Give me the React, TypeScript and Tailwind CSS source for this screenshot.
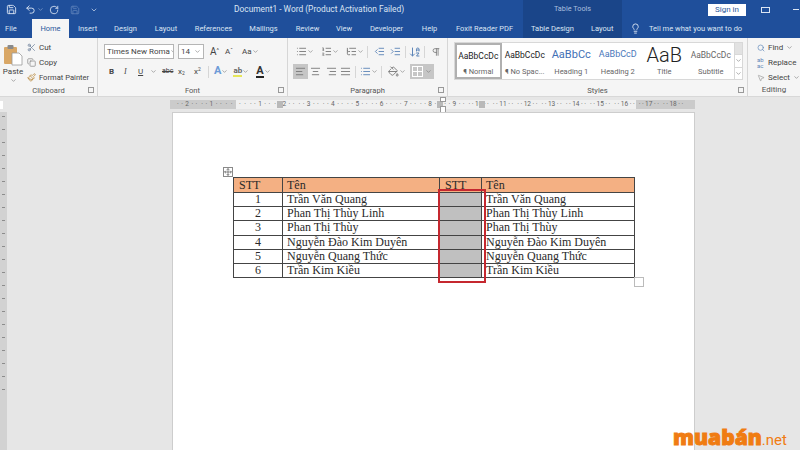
import {
  AlignCenter,
  AlignJustify,
  AlignLeft,
  AlignRight,
  ArrowDownAZ,
  ChevronDown,
  Copy,
  IndentDecrease,
  IndentIncrease,
  Lightbulb,
  List,
  ListOrdered,
  ListTree,
  MousePointer2,
  Move,
  PaintBucket,
  Paintbrush,
  Pilcrow,
  RotateCw,
  Save,
  Scissors,
  Search,
  Undo2,
} from "lucide-react";
import { ReactNode } from "react";

const tabs = [
  { label: "File", w: "w-[32px] justify-start pl-[5px]" },
  { label: "Home", w: "w-[37px] justify-center", active: true },
  { label: "Insert", w: "w-[37px] justify-center" },
  { label: "Design", w: "w-[39px] justify-center" },
  { label: "Layout", w: "w-[42px] justify-center" },
  { label: "References", w: "w-[53px] justify-center" },
  { label: "Mailings", w: "w-[47px] justify-center" },
  { label: "Review", w: "w-[41px] justify-center" },
  { label: "View", w: "w-[32px] justify-center" },
  { label: "Developer", w: "w-[53px] justify-center" },
  { label: "Help", w: "w-[33px] justify-center" },
  { label: "Foxit Reader PDF", w: "w-[77px] justify-center" },
];

const rows = [
  ["1", "Trần Văn Quang"],
  ["2", "Phan Thị Thùy Linh"],
  ["3", "Phan Thị Thùy"],
  ["4", "Nguyễn Đào Kim Duyên"],
  ["5", "Nguyễn Quang Thức"],
  ["6", "Trần Kim Kiều"],
];

const styleItems = [
  { sample: "AaBbCcDc", name: "¶ Normal", cls: "text-[8.5px] text-[#222]", selected: true },
  { sample: "AaBbCcDc", name: "¶ No Spac...", cls: "text-[8.5px] text-[#222]" },
  { sample: "AaBbCc", name: "Heading 1", cls: "text-[11px] text-[#3f6fb5]" },
  { sample: "AaBbCcD", name: "Heading 2", cls: "text-[9px] text-[#4a78ba]" },
  { sample: "AaB", name: "Title", cls: "text-[20px] leading-[22px] font-light text-[#222]" },
  { sample: "AaBbCcDc", name: "Subtitle", cls: "text-[8.5px] text-[#666]" },
];

const rulerLabels = ["2", "1", "", "1", "2", "3", "4", "5", "6", "7", "8", "9", "10", "11", "12", "13", "14", "15", "16", "17", "18"];

function Group({ label, width, launcher, children }: { label: string; width: string; launcher?: boolean; children: ReactNode }) {
  return (
    <div className={`${width} h-full flex flex-col border-r border-[#d6d6d6] shrink-0`}>
      <div className="flex-1 min-h-0">{children}</div>
      <div className="h-[11px] flex items-center relative text-[7.6px] text-[#555]">
        <span className="flex-1 text-center">{label}</span>
        {launcher && <span className="absolute right-[3px] top-[2px] w-[6px] h-[6px] border border-[#999]" />}
      </div>
    </div>
  );
}

function PasteIcon() {
  return (
    <svg width="20" height="22" viewBox="0 0 20 22">
      <rect x="1" y="3" width="13" height="17" rx="1" fill="#d9a766" />
      <rect x="4.5" y="1" width="6" height="4" rx="1" fill="#8a8a8a" />
      <path d="M9 9h7l3 3v9H9z" fill="#fff" stroke="#9a9a9a" strokeWidth="0.8" />
    </svg>
  );
}

function BordersIcon() {
  return (
    <svg width="11" height="11" viewBox="0 0 11 11" fill="none" stroke="#fff" strokeWidth="1">
      <rect x="0.5" y="0.5" width="10" height="10" />
      <path d="M5.5 0v11M0 5.5h11" />
    </svg>
  );
}

function Down() {
  return <ChevronDown size={7} className="text-[#777] shrink-0" />;
}

export default function App() {
  return (
    <div className="relative w-[800px] h-[450px] overflow-hidden flex flex-col bg-[#e6e6e6] font-['Roboto',sans-serif]">
      {/* title bar */}
      <div className="h-[19px] shrink-0 flex items-center bg-[#1f4f9b] text-[#dbe5f3]">
        <div className="w-[234px] flex items-center shrink-0">
          <Save size={11} className="ml-[6px]" />
          <Undo2 size={11} className="ml-[8px]" />
          <ChevronDown size={7} className="ml-[1px] text-[#9db4d8]" />
          <RotateCw size={10} className="ml-[5px]" />
          <Save size={10} className="ml-[11px] text-[#5f83bb]" />
          <ChevronDown size={8} className="ml-[10px]" />
        </div>
        <span className="w-[289px] shrink-0 text-[8.4px] whitespace-nowrap">Document1 - Word (Product Activation Failed)</span>
        <div className="w-[99px] h-full shrink-0 bg-[#1a4589] flex items-center justify-center text-[7.3px] text-[#a9bfdf]">Table Tools</div>
        <div className="ml-[86px] w-[38px] h-[12px] bg-white text-[#2b579a] text-[8px] flex items-center justify-center">Sign in</div>
        <span className="ml-[15px] w-[9px] h-[6px] border border-[#dbe5f3]" />
        <span className="ml-[23px] w-[6px] h-px bg-[#dbe5f3]" />
      </div>

      {/* tabs */}
      <div className="h-[19px] shrink-0 flex items-center bg-[#1f4f9b] text-[#dbe5f3] text-[7.5px]">
        {tabs.map((t) => (
          <div key={t.label} className={`${t.w} h-full shrink-0 flex items-center whitespace-nowrap ${t.active ? "bg-[#f5f5f5] text-[#2b579a]" : ""}`}>
            {t.label}
          </div>
        ))}
        <div className="w-[99px] h-full shrink-0 bg-[#1a4589] flex items-center pl-[8px] gap-[17px] whitespace-nowrap">
          <span>Table Design</span>
          <span>Layout</span>
        </div>
        <Lightbulb size={11} className="ml-[8px] shrink-0" />
        <span className="ml-[8px] whitespace-nowrap">Tell me what you want to do</span>
      </div>

      {/* ribbon */}
      <div className="h-[59px] shrink-0 flex bg-[#f5f5f5] border-b border-[#d8d8d8] text-[#444]">
        <Group label="Clipboard" width="w-[98px]" launcher>
          <div className="flex h-full">
            <div className="w-[26px] flex flex-col items-center pt-[6px] shrink-0">
              <PasteIcon />
              <span className="text-[8px] leading-[10px] mt-[1px]">Paste</span>
              <Down />
            </div>
            <div className="flex flex-col pt-[2px] pl-[1px] text-[8px] leading-[15px]">
              <div className="flex items-center gap-[3px]"><Scissors size={9} className="text-[#6b7f99]" />Cut</div>
              <div className="flex items-center gap-[3px]"><Copy size={9} className="text-[#8a8a8a]" />Copy</div>
              <div className="flex items-center gap-[3px] whitespace-nowrap text-[7.6px]"><Paintbrush size={9} className="text-[#b98a3e]" />Format Painter</div>
            </div>
          </div>
        </Group>

        <Group label="Font" width="w-[190px]" launcher>
          <div className="pl-[6px] pt-[6px] flex flex-col gap-[5px]">
            <div className="flex items-center h-[15px] text-[8px]">
              <div className="w-[70px] h-full border border-[#b5b5b5] bg-white flex items-center justify-between px-[2px] whitespace-nowrap overflow-hidden">Times New Roma<Down /></div>
              <div className="ml-[4px] w-[26px] h-full border border-[#b5b5b5] bg-white flex items-center justify-between px-[2px]">14<Down /></div>
              <span className="ml-[6px] text-[10px]">A</span><span className="text-[6px] -mt-[5px]">^</span>
              <span className="ml-[6px] text-[8px]">A</span><span className="text-[6px] -mt-[5px]">ˇ</span>
              <span className="ml-[9px]">Aa</span><Down />
            </div>
            <div className="flex items-center h-[15px] text-[8px] pl-[5px]">
              <b className="w-[15px]">B</b>
              <i className="w-[14px] font-['Liberation_Serif',serif]">I</i>
              <u className="w-[12px]">U</u><span className="w-[12px]"><Down /></span>
              <s className="w-[16px] text-[7px]">abc</s>
              <span className="w-[16px]">x<sub className="text-[5px]">2</sub></span>
              <span className="w-[14px]">x<sup className="text-[5px]">2</sup></span>
              <span className="w-[1px] h-[12px] bg-[#d6d6d6] mr-[5px]" />
              <span className="text-[11px] font-bold text-[#6d9bd8]">A</span><Down />
              <span className="ml-[5px] text-[8px] font-bold border-b-2 border-[#e6e65a] leading-[9px] text-[#666]">ab</span><Down />
              <span className="ml-[7px] text-[11px] font-bold border-b-2 border-[#222] leading-[11px] text-[#333]">A</span><Down />
            </div>
          </div>
        </Group>

        <Group label="Paragraph" width="w-[160px]" launcher>
          <div className="pl-[5px] pt-[6px] flex flex-col gap-[5px] text-[#7a7a7a]">
            <div className="flex items-center h-[15px]">
              <List size={11} className="ml-[3px]" /><Down />
              <ListOrdered size={11} className="ml-[7px]" /><Down />
              <ListTree size={11} className="ml-[7px]" /><Down />
              <span className="w-px h-[12px] bg-[#d6d6d6] ml-[3px]" />
              <IndentDecrease size={11} className="ml-[6px] text-[#5e86b8]" />
              <IndentIncrease size={11} className="ml-[5px] text-[#5e86b8]" />
              <span className="w-px h-[12px] bg-[#d6d6d6] ml-[4px]" />
              <ArrowDownAZ size={12} className="ml-[3px] text-[#5e86b8]" />
              <span className="w-px h-[12px] bg-[#d6d6d6] ml-[3px]" />
              <Pilcrow size={10} className="ml-[6px]" />
            </div>
            <div className="flex items-center h-[15px]">
              <span className="w-[15px] h-[15px] bg-[#c6c6c6] flex items-center justify-center"><AlignLeft size={11} /></span>
              <AlignCenter size={11} className="ml-[2px]" />
              <AlignRight size={11} className="ml-[5px]" />
              <AlignJustify size={11} className="ml-[3px]" />
              <span className="w-px h-[12px] bg-[#d6d6d6] ml-[4px]" />
              <List size={11} className="ml-[4px] text-[#5e86b8]" /><Down />
              <span className="w-px h-[12px] bg-[#d6d6d6] ml-[3px]" />
              <PaintBucket size={11} className="ml-[6px] text-[#777]" /><Down />
              <span className="ml-[4px] w-[24px] h-[15px] bg-[#c6c6c6] flex items-center pl-[2px] gap-[2px]">
                <BordersIcon />
                <Down />
              </span>
            </div>
          </div>
        </Group>

        <Group label="Styles" width="w-[300px]" launcher>
          <div className="pl-[6px] pt-[4px]">
            <div className="h-[38px] w-[289px] flex border border-[#d8d8d8] bg-white">
              {styleItems.map((s) => (
                <div key={s.name} className={`w-[46.5px] h-full shrink-0 flex flex-col items-center ${s.selected ? "border-2 border-[#b0b0b0]" : ""}`}>
                  <div className={`h-[24px] flex items-center whitespace-nowrap ${s.cls}`}>{s.sample}</div>
                  <div className="text-[7.5px] leading-[10px] text-[#666] whitespace-nowrap">{s.name}</div>
                </div>
              ))}
              <div className="flex-1 flex flex-col border-l border-[#d8d8d8] text-[#999]">
                <div className="flex-1 bg-[#e2e2e2]" />
                <div className="flex-1 flex items-center justify-center border-y border-[#d8d8d8]"><Down /></div>
                <div className="flex-1 flex items-center justify-center"><Down /></div>
              </div>
            </div>
          </div>
        </Group>

        <div className="flex-1 h-full flex flex-col text-[8px]">
          <div className="flex-1 flex flex-col pl-[9px] pt-[2px] leading-[15px]">
            <div className="flex items-center gap-[3px]"><Search size={8} className="text-[#5e86b8]" />Find<Down /></div>
            <div className="flex items-center gap-[3px]"><span className="text-[6px] text-[#5e86b8] leading-[6px] w-[8px]">ab ac</span>Replace</div>
            <div className="flex items-center gap-[3px]"><MousePointer2 size={8} className="text-[#999]" />Select<Down /></div>
          </div>
          <div className="h-[11px] leading-[10px] text-center text-[#555]">Editing</div>
        </div>
      </div>

      {/* horizontal ruler */}
      <div className="h-[15px] shrink-0 flex items-start pt-[3px]">
        <div className="w-[3px] h-[8px] bg-white mt-[1px]" />
        <div className="relative ml-[167px] w-[525px] h-[9px] flex pl-[5px] text-[6.5px] text-[#666] bg-[linear-gradient(to_right,#cbcbcb_66px,#f0f0f0_66px,#f0f0f0_466px,#cbcbcb_466px)]">
          {rulerLabels.map((n, i) => (
            <div key={i} className="w-[24.3px] shrink-0 flex items-center justify-between px-[2px]">
              <span>·</span>
              <span>·</span>
              <span>{n}</span>
              <span>·</span>
              <span>·</span>
            </div>
          ))}
          {/* column and indent markers */}
          <span className="absolute left-[107px] top-[1px] w-[6px] h-[7px] bg-[#b9b9b9]" />
          <span className="absolute left-[267px] top-[1px] w-[6px] h-[7px] bg-[#b9b9b9]" />
          <span className="absolute left-[270px] top-[-3px] w-[6px] h-[5px] border border-[#999] bg-white" />
          <span className="absolute left-[270px] top-[6px] w-[6px] h-[7px] border border-[#999] bg-white" />
          <span className="absolute left-[309px] top-[1px] w-[6px] h-[7px] bg-[#b9b9b9]" />
        </div>
      </div>

      {/* document area */}
      <div className="flex-1 min-h-0 flex">
        <div className="w-[7px] shrink-0 bg-[#d2d2d2] flex flex-col gap-[12px] pt-[4px] items-center">
          {Array.from({ length: 22 }).map((_, i) => (
            <span key={i} className="w-[3px] h-px bg-[#8c8c8c] shrink-0" />
          ))}
        </div>
        <div className="ml-[165px] w-[523px] h-[400px] bg-white border-x border-t border-[#cdcdcd] relative pt-[64px] pl-[60px] shrink-0">
          <table className="w-[401px] table-fixed border-collapse font-['Liberation_Serif',serif] text-[12px] leading-[13px] text-[#2a2a2a]">
            <colgroup>
              <col className="w-[49px]" />
              <col className="w-[157px]" />
              <col className="w-[42px]" />
              <col className="w-[153px]" />
            </colgroup>
            <thead>
              <tr className="bg-[#f4b083] h-[15px]">
                <th className="border border-[#444] font-normal text-left pl-[5px]">STT</th>
                <th className="border border-[#444] font-normal text-left pl-[4px]">Tên</th>
                <th className="border border-[#444] font-normal text-left pl-[5px]">STT</th>
                <th className="border border-[#444] font-normal text-left pl-[4px]">Tên</th>
              </tr>
            </thead>
            <tbody>
              {rows.map(([n, name]) => (
                <tr key={n} className="h-[14.2px]">
                  <td className="border border-[#444] text-center">{n}</td>
                  <td className="border border-[#444] pl-[4px] whitespace-nowrap">{name}</td>
                  <td className="border border-[#444] bg-[#c0c0c0]" />
                  <td className="border border-[#444] pl-[4px] whitespace-nowrap">{name}</td>
                </tr>
              ))}
            </tbody>
          </table>

          {/* table move handle */}
          <span className="absolute left-[50px] top-[54px] w-[10px] h-[10px] border border-[#8a8a8a] bg-white flex items-center justify-center text-[#555]">
            <Move size={8} />
          </span>
          {/* table resize handle */}
          <span className="absolute left-[461px] top-[164px] w-[10px] h-[10px] border border-[#bbb] bg-white" />
          {/* red highlight */}
          <span className="absolute left-[265px] top-[76px] w-[48px] h-[94px] border-2 border-[#c5282f]" />
        </div>
      </div>

      {/* logo */}
      <div className="absolute left-[673px] top-[425px] flex items-baseline text-[#f07c12] whitespace-nowrap">
        <span className="text-[21px] leading-[24px] font-extrabold font-['Open_Sans',sans-serif] [-webkit-text-stroke:1px_#f07c12]">muabán</span>
        <span className="text-[15px] leading-[24px]">.net</span>
      </div>
    </div>
  );
}
